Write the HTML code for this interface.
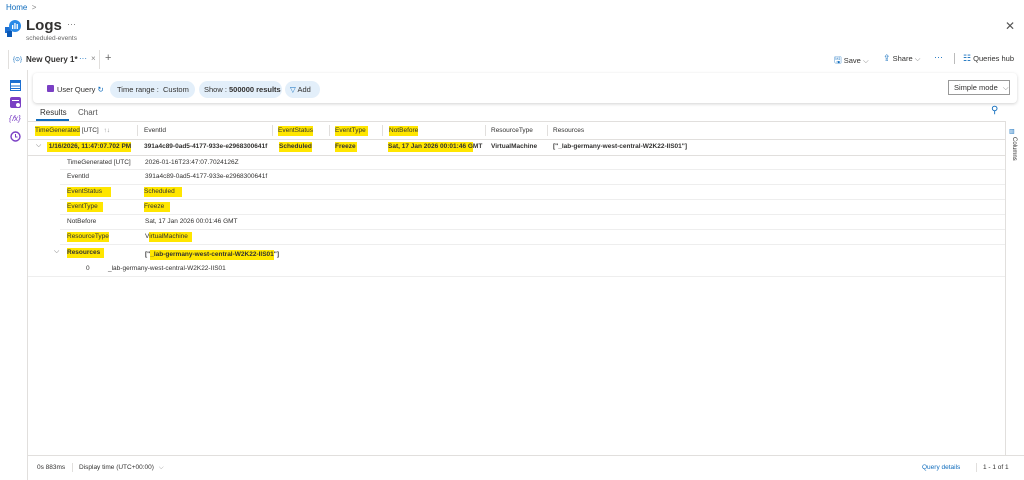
<!DOCTYPE html>
<html><head><meta charset="utf-8"><style>
*{margin:0;padding:0;box-sizing:border-box}
body{width:1024px;height:480px;background:#fff;font-family:"Liberation Sans",sans-serif;color:#323130;position:relative;overflow:hidden;font-size:7px}
.a{position:absolute;white-space:nowrap}
.hl{background:#ffe600;padding:1px 0 2px}
.b{font-weight:bold}
.line{position:absolute;background:#e1dfdd}
.pill{position:absolute;background:#e3effa;border-radius:10px;height:17px;top:81px;font-size:7.5px;line-height:17px;padding:0 7px;white-space:nowrap}
.blue{color:#0f6cbd}
</style></head><body>
<div class="a blue" style="left:6px;top:3px;font-size:8px">Home &nbsp;<span style="color:#888">&gt;</span></div>
<svg class="a" style="left:5px;top:20px" width="16" height="17" viewBox="0 0 16 17"><rect x="0" y="7" width="6" height="6" fill="#1d6fd1"/><rect x="2" y="11" width="5" height="6" fill="#0a58b5"/><circle cx="10" cy="6" r="6" fill="#2a8ae8"/><rect x="7" y="5" width="1.3" height="4" fill="#fff"/><rect x="9.3" y="3" width="1.3" height="6" fill="#fff"/><rect x="11.6" y="4" width="1.3" height="5" fill="#fff"/></svg>
<div class="a" style="left:26px;top:17px;font-size:15px;font-weight:600">Logs</div>
<div class="a" style="left:67px;top:19px;font-size:9px;color:#777">···</div>
<div class="a" style="left:26px;top:35px;font-size:6.5px;color:#666">scheduled-events</div>
<div class="a" style="left:1005px;top:19px;font-size:12px;color:#555">✕</div>
<div class="a" style="left:8px;top:50px;width:92px;height:19px;border-left:1px solid #e1dfdd;border-right:1px solid #e1dfdd"></div>
<div class="a" style="left:13px;top:56px;font-size:6px;color:#0f6cbd">{⊙}</div>
<div class="a b" style="left:26px;top:55px;font-size:8px">New Query 1*</div>
<div class="a blue" style="left:79px;top:54px;font-size:8px">···</div>
<div class="a" style="left:91px;top:54px;font-size:8px;color:#888">×</div>
<div class="a" style="left:105px;top:52px;font-size:11px;color:#666">+</div>
<div class="a" style="left:834px;top:53px;font-size:7.5px"><span class="blue" style="font-size:9px">🖫</span> Save <span style="color:#888">⌵</span></div>
<div class="a" style="left:883px;top:53px;font-size:7.5px"><span class="blue" style="font-size:9px">⇪</span> Share <span style="color:#888">⌵</span></div>
<div class="a blue" style="left:934px;top:52px;font-size:9px">···</div>
<div class="line" style="left:954px;top:53px;width:1px;height:11px;background:#bbb"></div>
<div class="a" style="left:963px;top:53px;font-size:7.5px"><span class="blue" style="font-size:9px">☷</span> Queries hub</div>
<div class="line" style="left:27px;top:70px;width:1px;height:410px"></div>
<svg class="a" style="left:10px;top:80px" width="11" height="11"><rect x="0.5" y="0.5" width="10" height="10" fill="#fff" stroke="#1d6fd1"/><rect x="0" y="0" width="11" height="3" fill="#1d6fd1"/><line x1="0" y1="6" x2="11" y2="6" stroke="#1d6fd1"/><line x1="0" y1="8.5" x2="11" y2="8.5" stroke="#1d6fd1"/></svg>
<svg class="a" style="left:10px;top:97px" width="11" height="11"><rect x="0" y="0" width="11" height="11" rx="2" fill="#7a3fc4"/><rect x="2" y="3" width="7" height="1" fill="#fff"/><circle cx="8" cy="8" r="2" fill="#fff"/></svg>
<div class="a" style="left:9px;top:114px;font-size:8px;color:#7a3fc4;font-style:italic">{𝑓x}</div>
<svg class="a" style="left:10px;top:131px" width="11" height="11"><circle cx="5.5" cy="5.5" r="4.5" fill="none" stroke="#7a3fc4" stroke-width="1.4"/><path d="M5.5 3v3h2" stroke="#7a3fc4" fill="none"/></svg>
<div class="a" style="left:33px;top:73px;width:984px;height:30px;border-radius:4px;box-shadow:0 1px 3px rgba(0,0,0,.18);background:#fff"></div>
<div class="a" style="left:47px;top:85px;width:7px;height:7px;background:#7a3fc4;border-radius:1px"></div>
<div class="a" style="left:57px;top:85px;font-size:7.5px">User Query <span class="blue">↻</span></div>
<div class="pill" style="left:110px;width:85px">Time range : &nbsp;Custom</div>
<div class="pill" style="left:199px;width:83px;padding:0 5px">Show : <b>500000 results</b></div>
<div class="pill" style="left:285px;width:35px;padding-left:5px"><span class="blue">▽</span> Add</div>
<div class="a" style="left:948px;top:80px;width:62px;height:15px;border:1px solid #999;font-size:7.5px;line-height:13px;padding-left:5px">Simple mode <span style="color:#888;margin-left:3px">⌵</span></div>
<div class="a" style="left:40px;top:108px;font-size:8px">Results</div>
<div class="a" style="left:78px;top:108px;font-size:8px;color:#555">Chart</div>
<div class="a" style="left:36px;top:119px;width:33px;height:2px;background:#0f6cbd"></div>
<div class="a blue" style="left:991px;top:105px;font-size:10px">⚲</div>
<div class="line" style="left:28px;top:121px;width:977px;height:1px"></div>
<div class="line" style="left:1005px;top:121px;width:1px;height:334px"></div>
<div class="a" style="left:1009px;top:128px;font-size:6px;color:#0f6cbd">▥</div>
<div class="a" style="top:137px;font-size:6px;transform:rotate(90deg);transform-origin:0 0;left:1017px">Columns</div>
<div class="a" style="top:127px;left:35px;font-size:6.5px"><span class="hl">TimeGenerated</span> [UTC] <span style="color:#888;margin-left:3px">↑↓</span></div>
<div class="a" style="top:127px;left:144px;font-size:6.5px">EventId</div>
<div class="a" style="top:127px;left:278px;font-size:6.5px"><span class="hl">EventStatus</span></div>
<div class="a" style="top:127px;left:335px;font-size:6.5px"><span class="hl">EventType&nbsp;</span></div>
<div class="a" style="top:127px;left:389px;font-size:6.5px"><span class="hl">NotBefore</span></div>
<div class="a" style="top:127px;left:491px;font-size:6.5px">ResourceType</div>
<div class="a" style="top:127px;left:553px;font-size:6.5px">Resources</div>
<div class="line" style="left:137px;top:125px;width:1px;height:11px"></div>
<div class="line" style="left:272px;top:125px;width:1px;height:11px"></div>
<div class="line" style="left:329px;top:125px;width:1px;height:11px"></div>
<div class="line" style="left:382px;top:125px;width:1px;height:11px"></div>
<div class="line" style="left:485px;top:125px;width:1px;height:11px"></div>
<div class="line" style="left:547px;top:125px;width:1px;height:11px"></div>
<div class="line" style="left:28px;top:139px;width:977px;height:1px"></div>
<div class="a" style="top:142px;left:36px;font-size:7px;color:#666">⌵</div>
<div class="a b" style="top:143px;left:47px;font-size:6.5px"><span class="hl">&nbsp;1/16/2026, 11:47:07.702 PM</span></div>
<div class="a b" style="top:143px;left:144px;font-size:6.5px">391a4c89-0ad5-4177-933e-e2968300641f</div>
<div class="a b" style="top:143px;left:279px;font-size:6.5px"><span class="hl">Scheduled</span></div>
<div class="a b" style="top:143px;left:335px;font-size:6.5px"><span class="hl">Freeze&nbsp;</span></div>
<div class="a b" style="top:143px;left:388px;font-size:6.5px"><span class="hl">Sat, 17 Jan 2026 00:01:46 G</span>MT</div>
<div class="a b" style="top:143px;left:491px;font-size:6.5px">VirtualMachine</div>
<div class="a b" style="top:143px;left:553px;font-size:6.5px">["_lab-germany-west-central-W2K22-IIS01"]</div>
<div class="line" style="left:28px;top:155px;width:977px;height:1px"></div>
<div class="a" style="top:159px;left:67px;font-size:6.5px">TimeGenerated [UTC]</div><div class="a" style="top:159px;left:145px;font-size:6.5px">2026-01-16T23:47:07.7024126Z</div>
<div class="line" style="left:60px;top:169px;width:945px;height:1px;background:#eee"></div>
<div class="a" style="top:173px;left:67px;font-size:6.5px">EventId</div><div class="a" style="top:173px;left:145px;font-size:6.5px">391a4c89-0ad5-4177-933e-e2968300641f</div>
<div class="line" style="left:60px;top:184px;width:945px;height:1px;background:#eee"></div>
<div class="a" style="top:188px;left:67px;font-size:6.5px"><span class="hl">EventStatus&nbsp;&nbsp;&nbsp;&nbsp;&nbsp;</span></div><div class="a" style="top:188px;left:144px;font-size:6.5px"><span class="hl">Scheduled&nbsp;&nbsp;&nbsp;&nbsp;</span></div>
<div class="line" style="left:60px;top:199px;width:945px;height:1px;background:#eee"></div>
<div class="a" style="top:203px;left:67px;font-size:6.5px"><span class="hl">EventType&nbsp;&nbsp;&nbsp;</span></div><div class="a" style="top:203px;left:144px;font-size:6.5px"><span class="hl">Freeze&nbsp;&nbsp;&nbsp;</span></div>
<div class="line" style="left:60px;top:214px;width:945px;height:1px;background:#eee"></div>
<div class="a" style="top:218px;left:67px;font-size:6.5px">NotBefore</div><div class="a" style="top:218px;left:145px;font-size:6.5px">Sat, 17 Jan 2026 00:01:46 GMT</div>
<div class="line" style="left:60px;top:229px;width:945px;height:1px;background:#eee"></div>
<div class="a" style="top:233px;left:67px;font-size:6.5px"><span class="hl">ResourceType</span></div><div class="a" style="top:233px;left:145px;font-size:6.5px">V<span class="hl">irtualMachine&nbsp;&nbsp;</span></div>
<div class="line" style="left:60px;top:244px;width:945px;height:1px;background:#eee"></div>
<div class="a" style="top:248px;left:54px;font-size:7px;color:#666">⌵</div>
<div class="a b" style="top:249px;left:67px;font-size:6.5px"><span class="hl">Resources&nbsp;&nbsp;</span></div><div class="a b" style="top:251px;left:145px;font-size:6.5px">["<span class="hl">_lab-germany-west-central-W2K22-IIS01</span>"]</div>
<div class="a" style="top:265px;left:86px;font-size:6.5px">0</div><div class="a" style="top:265px;left:108px;font-size:6.5px">_lab-germany-west-central-W2K22-IIS01</div>
<div class="line" style="left:28px;top:276px;width:977px;height:1px;background:#eee"></div>
<div class="line" style="left:28px;top:455px;width:996px;height:1px"></div>
<div class="a" style="top:464px;left:37px;font-size:6.5px">0s 883ms</div>
<div class="line" style="left:72px;top:463px;width:1px;height:9px"></div>
<div class="a" style="top:464px;left:79px;font-size:6.5px">Display time (UTC+00:00) <span style="color:#888;margin-left:3px">⌵</span></div>
<div class="a blue" style="top:464px;left:922px;font-size:6.5px">Query details</div>
<div class="line" style="left:976px;top:463px;width:1px;height:9px"></div>
<div class="a" style="top:464px;left:983px;font-size:6.5px">1 - 1 of 1</div>
</body></html>
